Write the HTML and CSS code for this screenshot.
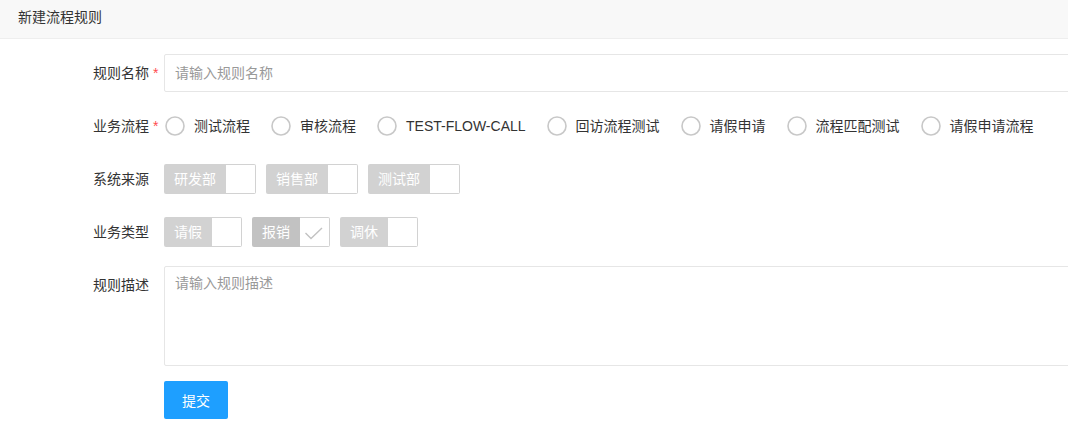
FILE: index.html
```html
<!DOCTYPE html>
<html lang="zh-CN">
<head>
<meta charset="utf-8">
<title>新建流程规则</title>
<link rel="stylesheet" href="styles.css">
</head>
<body>
<div class="card">
  <div class="card-header">新建流程规则</div>
  <form class="form">
    <div class="item">
      <label class="label"><span class="req">规则名称</span></label>
      <div class="block"><input class="input" type="text" placeholder="请输入规则名称"></div>
    </div>
    <div class="item">
      <label class="label"><span class="req">业务流程</span></label>
      <div class="block radios">
        <div class="radio"><svg class="radio-icon" viewBox="0 0 20 20"><circle cx="10" cy="10" r="9" /></svg><span>测试流程</span></div>
        <div class="radio"><svg class="radio-icon" viewBox="0 0 20 20"><circle cx="10" cy="10" r="9" /></svg><span>审核流程</span></div>
        <div class="radio"><svg class="radio-icon" viewBox="0 0 20 20"><circle cx="10" cy="10" r="9" /></svg><span>TEST-FLOW-CALL</span></div>
        <div class="radio"><svg class="radio-icon" viewBox="0 0 20 20"><circle cx="10" cy="10" r="9" /></svg><span>回访流程测试</span></div>
        <div class="radio"><svg class="radio-icon" viewBox="0 0 20 20"><circle cx="10" cy="10" r="9" /></svg><span>请假申请</span></div>
        <div class="radio"><svg class="radio-icon" viewBox="0 0 20 20"><circle cx="10" cy="10" r="9" /></svg><span>流程匹配测试</span></div>
        <div class="radio"><svg class="radio-icon" viewBox="0 0 20 20"><circle cx="10" cy="10" r="9" /></svg><span>请假申请流程</span></div>
      </div>
    </div>
    <div class="item">
      <label class="label">系统来源</label>
      <div class="block checks">
        <div class="cb"><span class="cb-text">研发部</span><span class="cb-box"></span></div>
        <div class="cb"><span class="cb-text">销售部</span><span class="cb-box"></span></div>
        <div class="cb"><span class="cb-text">测试部</span><span class="cb-box"></span></div>
      </div>
    </div>
    <div class="item">
      <label class="label">业务类型</label>
      <div class="block checks">
        <div class="cb"><span class="cb-text">请假</span><span class="cb-box"></span></div>
        <div class="cb cb-checked"><span class="cb-text">报销</span><span class="cb-box"><svg class="check" viewBox="0 0 29 28"><polyline points="5.5,15 11,20.5 22,10" /></svg></span></div>
        <div class="cb"><span class="cb-text">调休</span><span class="cb-box"></span></div>
      </div>
    </div>
    <div class="item">
      <label class="label">规则描述</label>
      <div class="block"><textarea class="textarea" placeholder="请输入规则描述"></textarea></div>
    </div>
    <div class="item item-btn">
      <div class="label"></div>
      <div class="block"><button class="btn" type="button">提交</button></div>
    </div>
  </form>
</div>
</body>
</html>
```
FILE: styles.css
```css
html, body {
  margin: 0;
  padding: 0;
  background: #fff;
  overflow: hidden;
}

body {
  font-family: "Liberation Sans", "Noto Sans CJK SC", sans-serif;
  font-size: 14px;
  color: #333;
}

.card-header {
  box-sizing: border-box;
  height: 39px;
  line-height: 35px;
  padding: 0 18px;
  background: #f8f8f8;
  border-bottom: 1px solid #eeeeee;
  color: #333;
}

.form {
  padding-top: 15px;
}

.item {
  display: grid;
  grid-template-columns: 164px auto;
  margin-bottom: 15px;
}

.label {
  box-sizing: border-box;
  padding: 9px 15px 9px 0;
  line-height: 20px;
  text-align: right;
  color: #333;
}

.req {
  position: relative;
}

.req::after {
  content: "*";
  position: absolute;
  left: 100%;
  top: -2px;
  margin-left: 4px;
  color: #ff4d4f;
  font-size: 14px;
}

.block {
  min-height: 38px;
}

.input {
  display: block;
  box-sizing: border-box;
  width: 940px;
  height: 38px;
  padding: 0 10px;
  border: 1px solid #e6e6e6;
  border-radius: 2px;
  font-family: inherit;
  font-size: 14px;
  color: #333;
  outline: none;
}

.input::placeholder,
.textarea::placeholder {
  color: #999;
}

.radios {
  display: flex;
  align-items: center;
  height: 38px;
  padding-left: 1px;
}

.radio {
  display: flex;
  align-items: center;
  margin-right: 21px;
  color: #333;
  white-space: nowrap;
}

.radio-icon {
  width: 20px;
  height: 20px;
  margin-right: 9px;
  fill: none;
  stroke: #c8c8c8;
  stroke-width: 1.6;
}

.radio span {
  line-height: 20px;
}

.checks {
  display: flex;
  align-items: center;
  height: 38px;
}

.cb {
  display: flex;
  height: 30px;
  margin-right: 10px;
}

.cb-text {
  padding: 0 10px;
  line-height: 30px;
  background: #d2d2d2;
  color: #fff;
  border-radius: 2px 0 0 2px;
  white-space: nowrap;
}

.cb-box {
  box-sizing: border-box;
  width: 30px;
  height: 30px;
  border: 1px solid #d2d2d2;
  border-left: none;
  border-radius: 0 2px 2px 0;
  background: #fff;
}

.cb-checked .cb-text {
  background: #c2c2c2;
}

.check {
  display: block;
  width: 29px;
  height: 28px;
  fill: none;
  stroke: #c2c2c2;
  stroke-width: 1.4;
}

.textarea {
  display: block;
  box-sizing: border-box;
  width: 940px;
  height: 100px;
  padding: 6px 10px;
  line-height: 20px;
  border: 1px solid #e6e6e6;
  border-radius: 2px;
  font-family: inherit;
  font-size: 14px;
  color: #333;
  resize: none;
  outline: none;
}

.btn {
  display: block;
  height: 38px;
  padding: 0 18px;
  border: none;
  border-radius: 2px;
  background: #1e9fff;
  color: #fff;
  font-family: inherit;
  font-size: 14px;
  cursor: pointer;
}
```
